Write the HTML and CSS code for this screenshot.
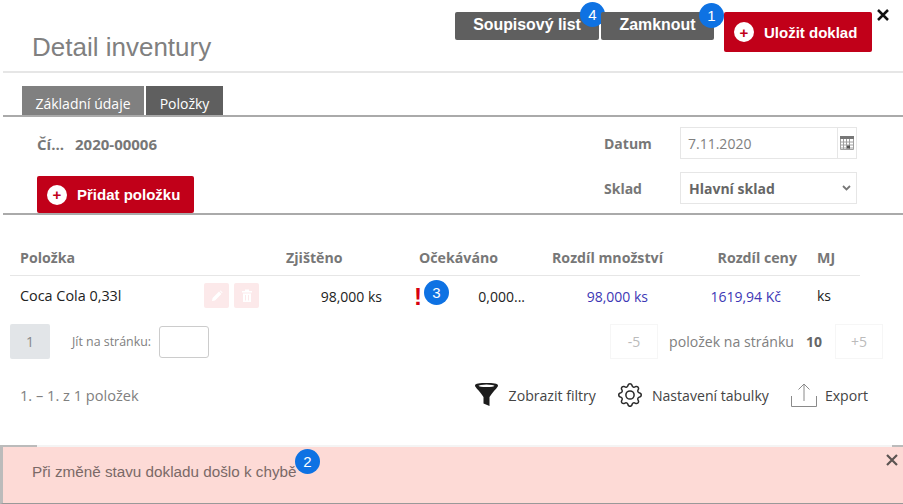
FILE: index.html
```html
<!DOCTYPE html>
<html lang="cs">
<head>
  <meta charset="UTF-8">
  <meta name="viewport" content="width=device-width, initial-scale=1.0">
  <title>Detail inventury</title>
  <link rel="stylesheet" href="styles.css">
</head>
<body>

<div class="page">
  <svg class="close" width="12" height="12" viewBox="0 0 12 12"><path d="M1 1l10 10M11 1L1 11" stroke="#111" stroke-width="2.500"/></svg>

  <header class="head">
    <h1 class="title">Detail inventury</h1>
    <div class="actions">
      <button class="btn-grey btn-first">Soupisový list<span class="badge badge-list">4</span></button>
      <button class="btn-grey btn-second">Zamknout<span class="badge badge-lock">1</span></button>
      <button class="btn-red btn-save"><span class="plus">+</span>Uložit doklad</button>
    </div>
  </header>

  <nav class="tabs">
    <span class="tab tab-off">Základní údaje</span>
    <span class="tab tab-on">Položky</span>
  </nav>

  <section class="form">
    <div class="form-left">
      <div class="number"><span class="number-label">Čí...</span><span>2020-00006</span></div>
      <button class="btn-red btn-add"><span class="plus">+</span>Přidat položku</button>
    </div>
    <div class="form-right">
      <div class="field">
        <label>Datum</label>
        <div class="date">
          <span class="date-value">7.11.2020</span>
          <span class="date-icon">
            <svg width="14" height="14" viewBox="0 0 14 14">
              <rect width="14" height="3" fill="#777"/>
              <path d="M.5 3v10.500h13V3M.5 6h13M.5 9h13M.5 12h13M3.500 3v10M6.500 3v10M9.500 3v10" fill="none" stroke="#a0a0a0"/>
              <rect x="7" y="9.500" width="3" height="3" fill="#555"/>
            </svg>
          </span>
        </div>
      </div>
      <div class="field">
        <label>Sklad</label>
        <div class="select">
          <span>Hlavní sklad</span>
          <svg width="9" height="6" viewBox="0 0 9 6"><path d="M1 1l3.500 3.500L8 1" fill="none" stroke="#777" stroke-width="1.800"/></svg>
        </div>
      </div>
    </div>
  </section>

  <section class="grid">
    <div class="row row-head">
      <div>Položka</div>
      <div>Zjištěno</div>
      <div>Očekáváno</div>
      <div>Rozdíl množství</div>
      <div class="cell-right">Rozdíl ceny</div>
      <div>MJ</div>
    </div>
    <div class="row row-body">
      <div class="cell-name">
        <span class="name-text">Coca Cola 0,33l</span>
        <span class="row-tools">
          <span class="tool">
            <svg width="12" height="12" viewBox="0 0 12 12"><path d="M1 11l.6-3L8 1.600 10.400 4 4 10.400zM8.800 1l.8-.6 2 2-.6.800z" fill="#fff"/></svg>
          </span>
          <span class="tool">
            <svg width="12" height="13" viewBox="0 0 12 13"><path d="M1 2h10v1.500H1zM4 .5h4V2H4zM2 4.500h8V13H2z" fill="#fff"/><path d="M4.500 6v5.500M7.500 6v5.500" stroke="#fce9ea"/></svg>
          </span>
        </span>
      </div>
      <div class="cell-value">98,000 ks</div>
      <div class="cell-expected">
        <span class="warn">!<span class="badge badge-warn">3</span></span>
        <span>0,000...</span>
      </div>
      <div class="cell-value cell-diff">98,000 ks</div>
      <div class="cell-value cell-diff cell-price">1619,94 Kč</div>
      <div class="cell-unit">ks</div>
    </div>
  </section>

  <section class="pager">
    <div class="pager-left">
      <span class="page-current">1</span>
      <span class="goto-label">Jít na stránku:</span>
      <span class="goto-input"></span>
    </div>
    <div class="pager-right">
      <span class="page-step">-5</span>
      <span class="per-page">položek na stránku</span>
      <strong class="per-count">10</strong>
      <span class="page-step">+5</span>
    </div>
  </section>

  <section class="foot">
    <span class="foot-count">1. – 1. z 1 položek</span>
    <div class="foot-links">
      <span class="foot-link link-filter">
        <svg width="23" height="24" viewBox="0 0 23 24"><path d="M0 2.500C0 .5 5 0 11.500 0S23 .5 23 2.500c0 1.500-2 3-6 8l-2.500 3.500V23l-6-2.500V14L6 10.500c-4-5-6-6.500-6-8z" fill="#1c1c1c"/><ellipse cx="11.500" cy="2.800" rx="8" ry="1.300" fill="#fff"/></svg>
        Zobrazit filtry
      </span>
      <span class="foot-link link-gear">
        <svg width="24" height="24" viewBox="0 0 16 16" fill="#2a2a2a">
          <path d="M8 4.754a3.246 3.246 0 1 0 0 6.492 3.246 3.246 0 0 0 0-6.492zM5.754 8a2.246 2.246 0 1 1 4.492 0 2.246 2.246 0 0 1-4.492 0z"/>
          <path d="M9.796 1.343c-.527-1.790-3.065-1.790-3.592 0l-.094.319a.873.873 0 0 1-1.255.52l-.292-.16c-1.640-.892-3.433.902-2.540 2.541l.159.292a.873.873 0 0 1-.52 1.255l-.319.094c-1.790.527-1.790 3.065 0 3.592l.319.094a.873.873 0 0 1 .52 1.255l-.16.292c-.892 1.640.901 3.434 2.541 2.540l.292-.159a.873.873 0 0 1 1.255.52l.094.319c.527 1.790 3.065 1.790 3.592 0l.094-.319a.873.873 0 0 1 1.255-.52l.292.16c1.640.893 3.434-.902 2.540-2.541l-.159-.292a.873.873 0 0 1 .52-1.255l.319-.094c1.790-.527 1.790-3.065 0-3.592l-.319-.094a.873.873 0 0 1-.52-1.255l.16-.292c.893-1.640-.902-3.433-2.541-2.540l-.292.159a.873.873 0 0 1-1.255-.52l-.094-.319zm-2.633.283c.246-.835 1.428-.835 1.674 0l.094.319a1.873 1.873 0 0 0 2.693 1.115l.291-.16c.764-.415 1.600.42 1.184 1.185l-.159.292a1.873 1.873 0 0 0 1.116 2.692l.318.094c.835.246.835 1.428 0 1.674l-.319.094a1.873 1.873 0 0 0-1.115 2.693l.16.291c.415.764-.42 1.600-1.185 1.184l-.291-.159a1.873 1.873 0 0 0-2.693 1.116l-.094.318c-.246.835-1.428.835-1.674 0l-.094-.319a1.873 1.873 0 0 0-2.692-1.115l-.292.16c-.764.415-1.600-.42-1.184-1.185l.159-.291A1.873 1.873 0 0 0 1.945 8.930l-.319-.094c-.835-.246-.835-1.428 0-1.674l.319-.094A1.873 1.873 0 0 0 3.060 4.377l-.16-.292c-.415-.764.42-1.600 1.185-1.184l.292.159a1.873 1.873 0 0 0 2.692-1.115l.094-.319z"/>
        </svg>
        Nastavení tabulky
      </span>
      <span class="foot-link link-export">
        <svg width="26" height="24" viewBox="0 0 26 24"><path d="M.5 13v10.500h25V13M13 18V1M7.500 6.500L13 1l5.500 5.500" fill="none" stroke="#8a8a8a"/></svg>
        Export
      </span>
    </div>
  </section>

  <div class="edge"></div>

  <div class="alert">
    <span class="alert-text">Při změně stavu dokladu došlo k chybě<span class="badge badge-alert">2</span></span>
    <svg class="alert-close" width="12" height="12" viewBox="0 0 12 12"><path d="M1 1l10 10M11 1L1 11" stroke="#5c5452" stroke-width="2.200"/></svg>
  </div>
</div>

</body>
</html>
```

FILE: styles.css
```css
* {
  box-sizing: border-box;
}

body {
  margin: 0;
  background-color: #fff;
  color: #222;
  font-family: 'Open Sans', sans-serif;
  font-size: 14px;
  overflow: hidden;
}

.page {
  position: relative;
  width: 903px;
  height: 504px;
  overflow: hidden;
}

.close {
  position: absolute;
  top: 9px;
  left: 877px;
}

/* head */
.head {
  display: flex;
  justify-content: space-between;
  height: 73px;
  margin-left: 3px;
  padding: 12px 31px 0 29px;
  border-bottom: 2px solid #e6e6e6;
}

.title {
  margin: 20px 0 0;
  color: #808080;
  font: normal 26px 'Liberation Sans', sans-serif;
}

.actions {
  display: flex;
  align-items: flex-start;
}

button {
  position: relative;
  border: 0;
  color: #fff;
  font: bold 15px 'Liberation Sans', sans-serif;
  padding: 0;
}

.btn-grey {
  height: 28px;
  border-radius: 2px;
  background-color: #5f5f5f;
  font-size: 15.9px;
  padding-bottom: 3px;
}

.btn-first {
  width: 144px;
  margin-right: 2px;
}

.btn-second {
  width: 113px;
  margin-right: 10px;
}

.btn-red {
  display: flex;
  align-items: center;
  border-radius: 2px;
  background-color: #c10019;
}

.btn-save {
  width: 148px;
  height: 40px;
  padding-left: 10px;
}

.btn-add {
  width: 157px;
  height: 37px;
  padding-left: 10px;
}

.plus {
  display: flex;
  align-items: center;
  justify-content: center;
  width: 20px;
  height: 20px;
  margin-right: 10px;
  border-radius: 50%;
  background-color: #fff;
  color: #c10019;
  font-size: 15px;
}

.badge {
  position: absolute;
  display: flex;
  align-items: center;
  justify-content: center;
  width: 25px;
  height: 25px;
  border-radius: 50%;
  background-color: #0e72e3;
  color: #fff;
  font: 15px 'Liberation Sans', sans-serif;
}

.badge-list {
  top: -10px;
  left: 125px;
}

.badge-lock {
  top: -9px;
  left: 98px;
}

.badge-warn {
  top: -7px;
  left: 10px;
}

.badge-alert {
  top: -14px;
  left: 263px;
}

/* tabs */
.tabs {
  display: flex;
  gap: 2px;
  height: 44px;
  margin-left: 3px;
  padding: 13px 0 0 19px;
  border-bottom: 2px solid #aaa;
}

.tab {
  display: flex;
  align-items: flex-end;
  justify-content: center;
  height: 29px;
  padding-bottom: 2px;
  color: #fff;
  font-size: 14px;
}

.tab-off {
  width: 122px;
  background-color: #808080;
}

.tab-on {
  width: 77px;
  background-color: #5f5f5f;
}

/* form */
.form {
  display: flex;
  justify-content: space-between;
  height: 98px;
  margin-left: 3px;
  padding: 9px 46px 0 34px;
  border-bottom: 2px solid #aaa;
}

.form-left {
  display: flex;
  flex-direction: column;
  justify-content: space-between;
  align-items: flex-start;
}

.number {
  display: flex;
  margin-top: 8px;
  color: #777;
  font-weight: 700;
  font-size: 15px;
}

.number-label {
  width: 38px;
}

.form-right {
  display: flex;
  flex-direction: column;
  gap: 13px;
  padding-top: 1px;
}

.field {
  display: flex;
  align-items: center;
  height: 32px;
}

.field label {
  width: 76px;
  color: #777;
  font-weight: 700;
  font-size: 14px;
}

.date,
.select {
  display: flex;
  align-items: center;
  width: 177px;
  height: 32px;
  border: 1px solid #e6e6e6;
  color: #808080;
  font-size: 14px;
}

.date-value {
  flex: 1;
  padding-left: 7px;
}

.date-icon {
  display: flex;
  align-items: center;
  justify-content: center;
  width: 19px;
  height: 30px;
  border-left: 1px solid #e6e6e6;
}

.select {
  justify-content: space-between;
  padding: 0 5px 0 8px;
  color: #666;
  font-weight: 700;
}

/* table */
.grid {
  margin: 0 43px 0 10px;
}

.row {
  display: grid;
  grid-template-columns: 266px 133px 133px 133px 132px 53px;
}

.row > div {
  padding-left: 10px;
}

.row-head {
  align-items: center;
  height: 61px;
  padding-top: 24px;
  border-bottom: 1px solid #e6e6e6;
  color: #777;
  font-size: 14.2px;
  font-weight: 700;
}

.row-head .cell-right {
  padding-right: 10px;
  text-align: right;
}

.row-body {
  align-items: center;
  height: 39px;
}

.cell-name {
  display: flex;
  align-items: center;
  height: 25px;
}

.name-text {
  width: 184px;
  font-size: 14.4px;
}

.row-tools {
  display: flex;
  gap: 5px;
}

.tool {
  display: flex;
  align-items: center;
  justify-content: center;
  width: 25px;
  height: 25px;
  border-radius: 2px;
  background-color: #fce9ea;
}

.row .cell-value {
  padding-top: 1px;
  padding-right: 27px;
  text-align: right;
}

.row .cell-diff {
  color: #3d37b5;
}

.row .cell-price {
  padding-right: 26px;
}

.cell-expected {
  display: flex;
  justify-content: space-between;
  padding-top: 1px;
  padding-right: 17px;
}

.warn {
  position: relative;
  margin-left: -5px;
  color: #d7000f;
  font: 900 24px/19px 'Liberation Sans', sans-serif;
}

.cell-unit {
  padding-bottom: 1px;
}

/* pager */
.pager {
  display: flex;
  justify-content: space-between;
  height: 62px;
  padding: 9px 20px 0 10px;
  color: #808080;
}

.pager-left,
.pager-right {
  display: flex;
  align-items: flex-start;
}

.page-current {
  display: flex;
  align-items: center;
  justify-content: center;
  width: 40px;
  height: 35px;
  border-radius: 2px;
  background-color: #e2e5e8;
  color: #888;
  font-size: 14px;
}

.goto-label {
  width: 87px;
  margin-left: 22px;
  line-height: 35px;
  font-size: 12.4px;
}

.goto-input {
  width: 50px;
  height: 32px;
  margin-top: 2px;
  border: 1px solid #ccc;
  border-radius: 3px;
}

.page-step {
  display: flex;
  align-items: center;
  justify-content: center;
  width: 48px;
  height: 35px;
  border: 1px solid #f6f6f6;
  color: #bbb;
  font-size: 14px;
}

.per-page {
  margin-left: 11px;
  line-height: 35px;
  font-size: 14.1px;
}

.per-count {
  width: 41px;
  padding-left: 12px;
  color: #666;
  font-size: 14px;
  line-height: 35px;
}

/* foot */
.foot {
  display: flex;
  justify-content: space-between;
  align-items: center;
  height: 68px;
  padding: 0 35px 32px 20px;
  color: #808080;
}

.foot-count {
  font-size: 14.6px;
}

.foot-links {
  display: flex;
  color: #444;
  font-size: 14.1px;
}

.foot-link {
  display: flex;
  align-items: center;
  gap: 11px;
}

.link-gear {
  gap: 10px;
  margin-left: 22px;
}

.link-export {
  gap: 8px;
  margin-left: 22px;
}

.edge {
  height: 2px;
  background: linear-gradient(to right, #bbb 37px, #f4f4f4 37px, #f4f4f4 892px, #bbb 892px);
}

/* alert */
.alert {
  display: flex;
  justify-content: space-between;
  align-items: flex-start;
  height: 57px;
  padding: 16px 5px 0 29px;
  border-left: 3px solid #bbb;
  border-bottom: 1px solid #999;
  background-color: #fddad6;
  color: #7a6967;
  font: 15.25px 'Liberation Sans', sans-serif;
}

.alert-text {
  position: relative;
  height: 18px;
}

.alert-close {
  margin-top: -9px;
}
```
